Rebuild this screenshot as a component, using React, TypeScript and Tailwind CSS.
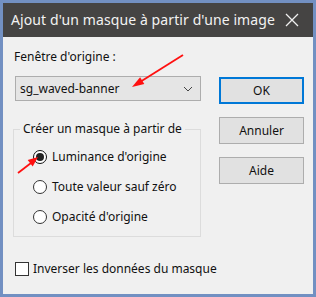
import React from 'react'

const font = { fontFamily: '"Noto Sans", "Segoe UI", sans-serif' }

const Radio: React.FC<{checked?: boolean, label: string}> = ({checked, label}) => (
  <div className="flex items-center h-[30px]">
    <span className={`w-[14px] h-[14px] rounded-full border bg-white flex items-center justify-center ${checked ? 'border-[#111]' : 'border-[#333]'}`}>
      {checked && <span className="w-[8px] h-[8px] rounded-full bg-[#222]" />}
    </span>
    <span className="ml-[5px] text-[12px] text-[#111] leading-[16px]">{label}</span>
  </div>
)

const Btn: React.FC<{children: React.ReactNode, primary?: boolean}> = ({children, primary}) => (
  <div className={`h-[27px] w-[85px] flex items-center justify-center bg-[#e1e1e1] text-[12px] text-[#111] ${primary ? 'border-2 border-[#0078d7]' : 'border border-[#adadad]'}`}>
    {children}
  </div>
)

export default function App() {
  return (
    <div className="relative w-[316px] h-[297px] bg-[#7290c2] p-[3px] flex flex-col" style={font}>
      <div className="h-[34px] bg-[#454443] flex items-center justify-between pl-[8px] pr-[14px] shrink-0">
        <span className="text-[14px] whitespace-nowrap text-[#f2f2f2] leading-[20px] tracking-[0.1px]">Ajout d'un masque à partir d'une image</span>
        <svg width="14" height="14" viewBox="0 0 14 14">
          <path d="M1 1 L13 13 M13 1 L1 13" stroke="#f0f0f0" strokeWidth="1.3" />
        </svg>
      </div>
      <div className="flex-1 bg-[#f0f0f0] flex flex-col pl-[10px]">
        <div className="flex">
          <div className="w-[188px] flex flex-col">
            <div className="mt-[12px] ml-[1px] text-[12px] leading-[16px] text-[#111]">Fenêtre d'origine :</div>
            <div className="mt-[11px] ml-[2px] h-[25px] w-[186px] bg-[#e5e5e5] border border-[#adadad] flex items-center justify-between pl-[4px] pr-[7px]">
              <span className="text-[12px] text-[#111]">sg_waved-banner</span>
              <svg width="10" height="6" viewBox="0 0 10 6">
                <path d="M1 1 L5 5 L9 1" stroke="#444" strokeWidth="1" fill="none" />
              </svg>
            </div>
            <div className="relative mt-[28px] h-[108px] w-[188px] border border-[#dcdcdc]">
              <span className="absolute -top-[9px] left-[6px] px-[3px] bg-[#f0f0f0] text-[12px] leading-[16px] text-[#111]">Créer un masque à partir de</span>
              <div className="flex flex-col pt-[12px] pl-[19px]">
                <Radio checked label="Luminance d'origine" />
                <Radio label="Toute valeur sauf zéro" />
                <Radio label="Opacité d'origine" />
              </div>
            </div>
          </div>
          <div className="ml-[18px] mt-[40px] flex flex-col gap-[13px]">
            <Btn primary>OK</Btn>
            <Btn>Annuler</Btn>
            <Btn>Aide</Btn>
          </div>
        </div>
        <div className="mt-[24px] ml-[2px] flex items-center">
          <span className="w-[14px] h-[14px] bg-white border border-[#333]" />
          <span className="ml-[4px] text-[12px] leading-[16px] text-[#111]">Inverser les données du masque</span>
        </div>
      </div>
      <svg className="absolute inset-0 pointer-events-none" width="316" height="297" viewBox="0 0 316 297">
        <line x1="183" y1="55" x2="140" y2="82" stroke="#ff1010" strokeWidth="1.8" />
        <polygon points="132,87 144.3,84 140.1,77.2" fill="#ff1010" />
        <line x1="18" y1="173" x2="31" y2="163" stroke="#ff1010" strokeWidth="1.8" />
        <polygon points="38,157 32.7,166.4 27.7,160.1" fill="#ff1010" />
      </svg>
    </div>
  )
}
